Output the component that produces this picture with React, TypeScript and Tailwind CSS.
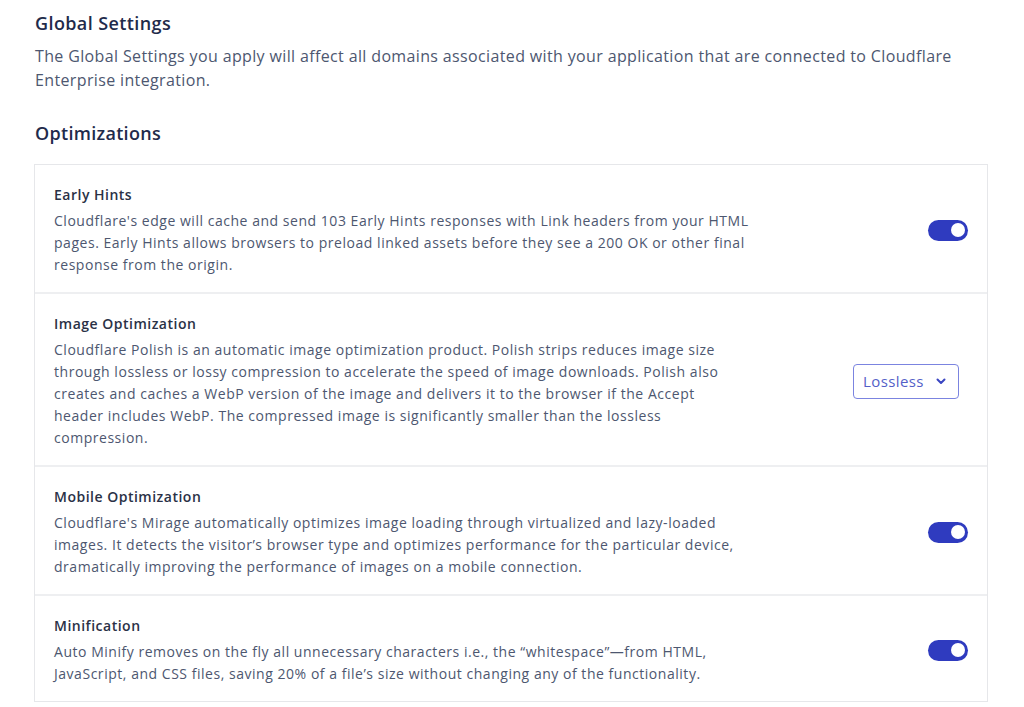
import React, { useState } from 'react';

type Row = {
  title: string;
  lines: string[];
  control: 'toggle' | 'select';
};

const rows: Row[] = [
  {
    title: 'Early Hints',
    lines: [
      "Cloudflare's edge will cache and send 103 Early Hints responses with Link headers from your HTML",
      'pages. Early Hints allows browsers to preload linked assets before they see a 200 OK or other final',
      'response from the origin.',
    ],
    control: 'toggle',
  },
  {
    title: 'Image Optimization',
    lines: [
      'Cloudflare Polish is an automatic image optimization product. Polish strips reduces image size',
      'through lossless or lossy compression to accelerate the speed of image downloads. Polish also',
      'creates and caches a WebP version of the image and delivers it to the browser if the Accept',
      'header includes WebP. The compressed image is significantly smaller than the lossless',
      'compression.',
    ],
    control: 'select',
  },
  {
    title: 'Mobile Optimization',
    lines: [
      "Cloudflare's Mirage automatically optimizes image loading through virtualized and lazy-loaded",
      'images. It detects the visitor\u2019s browser type and optimizes performance for the particular device,',
      'dramatically improving the performance of images on a mobile connection.',
    ],
    control: 'toggle',
  },
  {
    title: 'Minification',
    lines: [
      'Auto Minify removes on the fly all unnecessary characters i.e., the \u201cwhitespace\u201d\u2014from HTML,',
      'JavaScript, and CSS files, saving 20% of a file\u2019s size without changing any of the functionality.',
    ],
    control: 'toggle',
  },
];

const Toggle: React.FC = () => {
  const [on, setOn] = useState(true);
  return (
    <button
      onClick={() => setOn(!on)}
      className={`flex items-center w-[40px] h-[21px] rounded-full px-[3px] ${on ? 'bg-[#2f3bbf] justify-end' : 'bg-gray-300 justify-start'}`}
    >
      <span className="block w-[14px] h-[14px] rounded-full bg-white" />
    </button>
  );
};

const Select: React.FC = () => (
  <button className="flex items-center justify-between h-[35px] w-[106px] mr-[9px] pl-[9px] pr-[11px] rounded-[4px] border border-[#7b84e0] text-[15px] tracking-[0.4px] text-[#545fc8]">
    <span>Lossless</span>
    <svg width="12" height="12" viewBox="0 0 24 24" fill="none" stroke="#3a45c2" strokeWidth="4" strokeLinecap="round" strokeLinejoin="round">
      <path d="M5 9l7 7 7-7" />
    </svg>
  </button>
);

export default function App() {
  return (
    <div className="min-h-screen bg-white px-[35px] pt-[10px] font-['Open_Sans',sans-serif]">
      <h1 className="text-[18px] leading-[26px] font-semibold tracking-[0.4px] text-[#1f2b4b]">Global Settings</h1>
      <p className="mt-[8px] text-[16px] leading-[24px] tracking-[0.36px] text-[#4d5770] w-[930px]">
        The Global Settings you apply will affect all domains associated with your application that are connected to Cloudflare Enterprise integration.
      </p>
      <h2 className="mt-[28px] text-[18px] leading-[26px] font-semibold tracking-[0.3px] text-[#1f2b4b]">Optimizations</h2>
      <div className="mt-[18px] w-[954px] -ml-px border border-[#e6e7ea]">
        {rows.map((r, i) => (
          <div key={i} className={`flex items-center justify-between px-[19px] pt-[19px] pb-[16px] ${i > 0 ? 'border-t-2 border-[#eeeff1]' : ''}`}>
            <div className="w-[720px]">
              <div className="text-[14px] leading-[22px] font-semibold tracking-[0.5px] text-[#2a3146]">{r.title}</div>
              <p className="mt-[4px] text-[14px] leading-[22px] tracking-[0.53px] text-[#4d5770]">
                {r.lines.map((l, j) => (
                  <span key={j} className="block whitespace-nowrap">{l}</span>
                ))}
              </p>
            </div>
            {r.control === 'toggle' ? <Toggle /> : <Select />}
          </div>
        ))}
      </div>
    </div>
  );
}
